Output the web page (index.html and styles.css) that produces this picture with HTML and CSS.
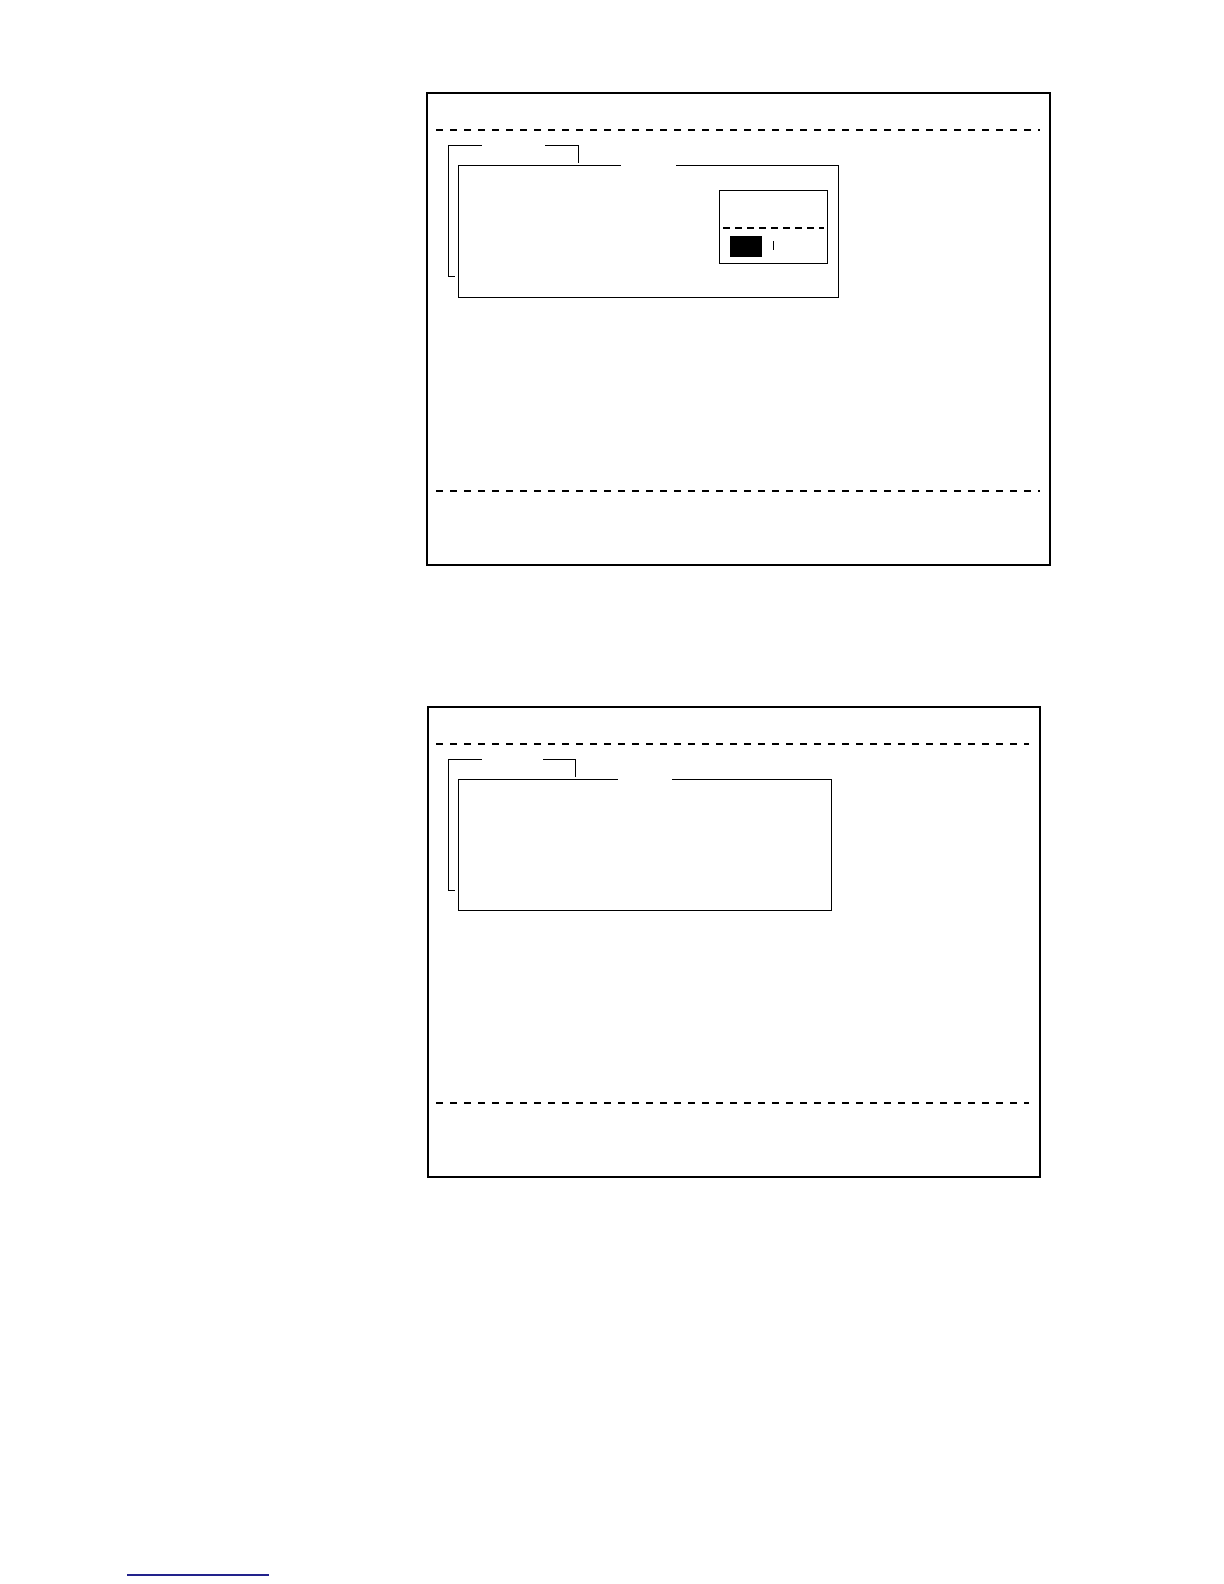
FILE: index.html
```html
<!DOCTYPE html>
<html lang="en">
<head>
<meta charset="utf-8">
<title>Screens</title>
<link rel="stylesheet" href="styles.css">
</head>
<body>
<div class="page">
  <section class="panel panel-a">
    <div class="panel-head"></div>
    <div class="rule rule-a"></div>
    <div class="panel-body body-a">
      <div class="group">
        <div class="tab tab-left"></div>
        <div class="tab tab-right tab-right-a"></div>
        <div class="frame frame-a">
          <div class="frame-top">
            <span class="seg seg-first seg-first-a"></span>
            <span class="seg-gap seg-gap-a"></span>
            <span class="seg seg-rest"></span>
          </div>
          <div class="frame-body">
            <div class="mini">
              <div class="mini-head"></div>
              <div class="mini-rule"></div>
              <div class="mini-row">
                <span class="key"></span>
                <span class="caret"></span>
              </div>
            </div>
          </div>
        </div>
      </div>
    </div>
    <div class="rule rule-a"></div>
    <div class="panel-foot"></div>
  </section>

  <section class="panel panel-b">
    <div class="panel-head"></div>
    <div class="rule rule-b"></div>
    <div class="panel-body body-b">
      <div class="group">
        <div class="tab tab-left"></div>
        <div class="tab tab-right tab-right-b"></div>
        <div class="frame frame-b">
          <div class="frame-top">
            <span class="seg seg-first seg-first-b"></span>
            <span class="seg-gap seg-gap-b"></span>
            <span class="seg seg-rest"></span>
          </div>
          <div class="frame-body"></div>
        </div>
      </div>
    </div>
    <div class="rule rule-b"></div>
    <div class="panel-foot"></div>
  </section>

  <footer class="page-foot">
    <div class="link-line"></div>
  </footer>
</div>
</body>
</html>
```

FILE: styles.css
```css
* {
  box-sizing: border-box;
}

html, body {
  margin: 0;
  padding: 0;
  background: #ffffff;
}

body {
  font-family: "Liberation Sans", Arial, sans-serif;
  color: #000000;
}

.page {
  width: 1224px;
  padding-top: 92px;
}

/* ---------- panels ---------- */
.panel {
  border: 2px solid #000000;
  display: flex;
  flex-direction: column;
}

.panel-a {
  margin-left: 426px;
  width: 625px;
  height: 474px;
}

.panel-b {
  margin-left: 427px;
  margin-top: 140px;
  width: 614px;
  height: 472px;
}

.panel-head {
  flex: none;
  height: 35px;
}

.rule {
  flex: none;
  height: 2px;
  background: repeating-linear-gradient(to right, #000000 0 7px, transparent 7px 14px);
}

.rule-a {
  margin: 0 9px 0 8px;
}

.rule-b {
  margin: 0 10px 0 7px;
}

.panel-body {
  flex: 1;
  padding-top: 14px;
}

.body-a {
  padding-left: 20px;
}

.body-b {
  padding-left: 19px;
}

.panel-foot {
  flex: none;
  height: 72px;
}

/* ---------- tab group ---------- */
.group {
  position: relative;
  padding: 20px 0 0 10px;
}

.tab {
  position: absolute;
  top: 0;
}

.tab-left {
  left: 0;
  width: 34px;
  height: 132px;
  border-left: 1px solid #000000;
  border-top: 1px solid #000000;
}

.tab-left::after {
  content: "";
  position: absolute;
  left: -1px;
  bottom: 0;
  width: 7px;
  height: 1px;
  background: #000000;
}

.tab-right {
  height: 18px;
  border-top: 1px solid #000000;
  border-right: 1px solid #000000;
}

.tab-right-a {
  left: 97px;
  width: 34px;
}

.tab-right-b {
  left: 95px;
  width: 33px;
}

/* ---------- frame ---------- */
.frame {
  border: 1px solid #000000;
  border-top: none;
  display: flex;
  flex-direction: column;
}

.frame-a {
  width: 381px;
  height: 133px;
}

.frame-b {
  width: 374px;
  height: 132px;
}

.frame-top {
  flex: none;
  display: flex;
  height: 1px;
  margin: 0 -1px;
}

.seg {
  height: 1px;
  background: #000000;
}

.seg-first-a {
  width: 163px;
}

.seg-gap-a {
  width: 55px;
}

.seg-first-b {
  width: 160px;
}

.seg-gap-b {
  width: 54px;
}

.seg-rest {
  flex: 1;
}

.frame-body {
  flex: 1;
  display: flex;
  justify-content: flex-end;
  align-items: flex-start;
  padding: 24px 10px 0 0;
}

/* ---------- small box ---------- */
.mini {
  width: 109px;
  height: 74px;
  border: 1px solid #000000;
  display: flex;
  flex-direction: column;
}

.mini-head {
  flex: none;
  height: 36px;
}

.mini-rule {
  flex: none;
  height: 2px;
  margin: 0 3px 0 3px;
  background: repeating-linear-gradient(to right, #000000 0 7px, transparent 7px 12px);
}

.mini-row {
  display: flex;
  align-items: flex-start;
  padding: 7px 0 0 10px;
}

.key {
  width: 32px;
  height: 21px;
  background: #000000;
}

.caret {
  width: 1px;
  height: 9px;
  margin: 5px 0 0 11px;
  background: #000000;
}

/* ---------- footer ---------- */
.page-foot {
  margin-top: 396px;
  padding-left: 127px;
}

.link-line {
  width: 142px;
  height: 2px;
  background: #22228c;
}
```
